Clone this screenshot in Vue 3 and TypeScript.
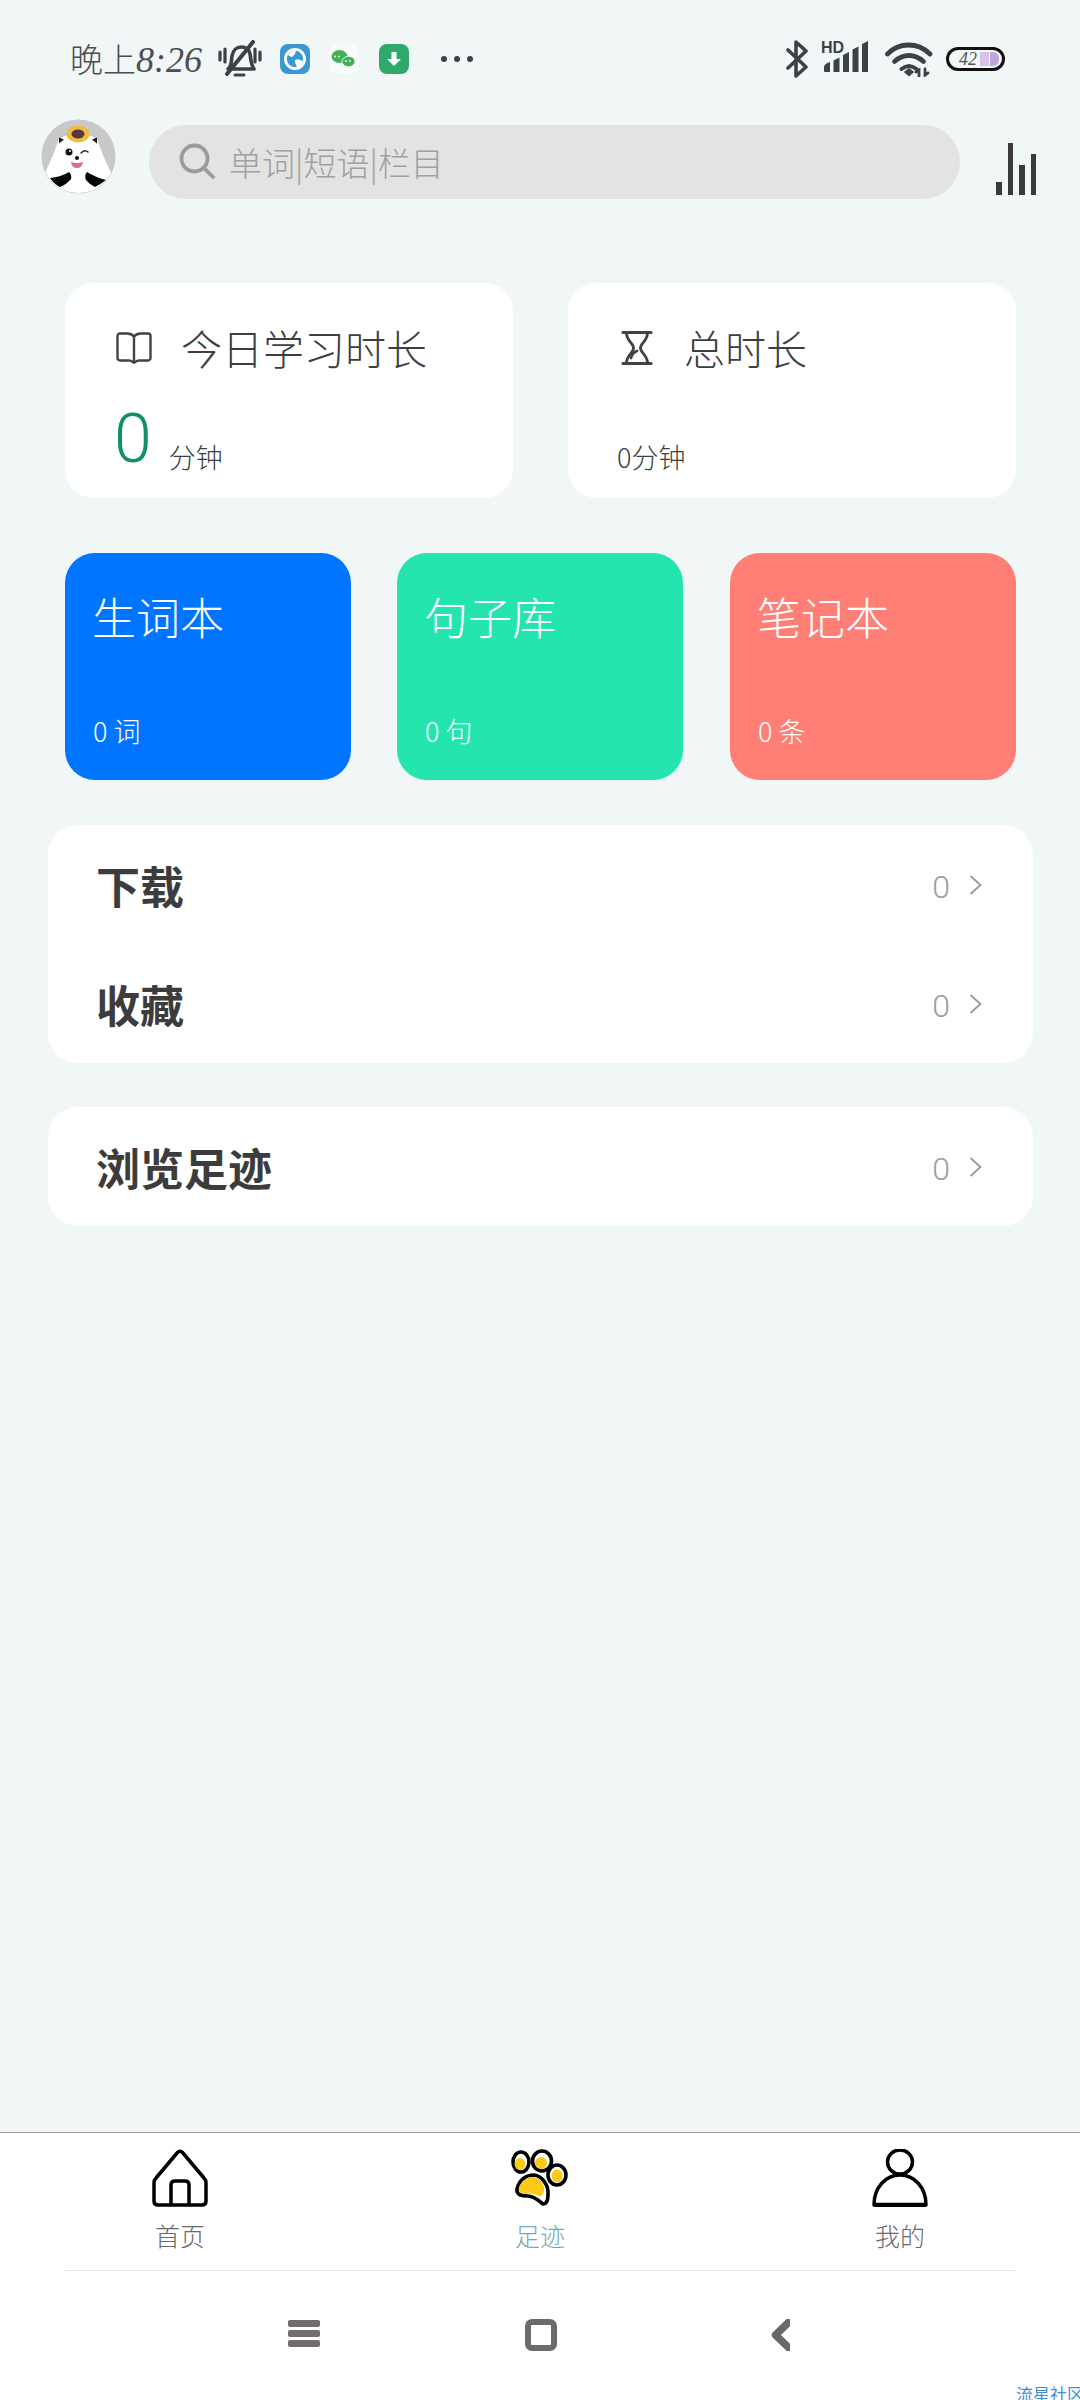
<script setup lang="ts">
const colorCards = [
  { title: '生词本', count: '0 词', cls: 'blue' },
  { title: '句子库', count: '0 句', cls: 'green' },
  { title: '笔记本', count: '0 条', cls: 'red' },
]
const topRows = ['下载', '收藏']
</script>

<template>
  <div class="page">
    <div class="status">
      <div class="status-left">
        <span class="time"><span>晚上</span><span class="time-num">8:26</span></span>
        <svg class="bell" width="44" height="38" viewBox="0 0 44 38" fill="none" stroke="#3c4144" stroke-width="3.2" stroke-linecap="round">
          <path d="M2 12v8M7 9v13M37 9v13M42 12v8" />
          <path d="M10 29c4-3 3-7 4-13 1-6 5-9 9-9 5 0 8 2 9 7 1 6 1 11 4 15H10z" stroke-width="3.6" stroke-linejoin="round" />
          <path d="M9 34 35 2" stroke-width="4" />
          <path d="M17 35h9" stroke-width="3" />
        </svg>
        <svg class="app-icon first" width="32" height="32" viewBox="0 0 32 32">
          <rect x="1" y="1" width="30" height="30" rx="8" fill="#3b97d3" />
          <circle cx="16" cy="16" r="11" fill="#fff" />
          <circle cx="16" cy="16" r="8.2" fill="#3b97d3" />
          <path d="M9 12c3-4 6-5 8-5l-1 4-3 3-3-1zM16 17c3-2 5 0 8 1-1 4-3 6-6 7 0-3-3-5-2-8z" fill="#fff" />
        </svg>
        <svg class="app-icon wechat" width="32" height="32" viewBox="0 0 32 32">
          <rect x="1" y="1" width="30" height="30" rx="9" fill="#f7fbfa" />
          <ellipse cx="11.500" cy="13.500" rx="8" ry="6.400" fill="#43b05c" />
          <ellipse cx="20.500" cy="18.500" rx="6.500" ry="5.200" fill="#43b05c" stroke="#f7fbfa" stroke-width=".8" />
          <path d="M7 13.500h.01M11 13.500h.01M18 18h.01M22 18h.01" stroke="#eaf6ec" stroke-width="1.800" stroke-linecap="round" />
        </svg>
        <svg class="app-icon download" width="32" height="32" viewBox="0 0 32 32">
          <rect x="1" y="1" width="30" height="30" rx="8" fill="#2fa96b" />
          <path d="M13.500 9h5v7h4.500L16 23l-7-7h4.500z" fill="#fff" />
        </svg>
        <div class="dots"><i></i><i></i><i></i></div>
      </div>
      <div class="status-right">
        <svg width="24" height="38" viewBox="0 0 24 38" fill="none" stroke="#3c4144" stroke-width="3.600" stroke-linecap="round" stroke-linejoin="round">
          <path d="M2 10 20 27 10 36V2l10 9L2 28" />
        </svg>
        <svg class="signal" width="52" height="34" viewBox="0 0 52 34">
          <text x="0" y="12" class="hd">HD</text>
          <path d="M3 26q0-3 6-5v10H4q-1 0-1-1zM12.500 19.500l6-3V31h-6zM22 14l6-3v20h-6zM31.500 8.500l6-3V31h-6zM41 3l6-3V31h-6z" fill="#3c4144" />
        </svg>
        <svg class="wifi" width="48" height="36" viewBox="0 0 48 36" fill="none" stroke="#3c4144" stroke-width="4.800" stroke-linecap="round">
          <path d="M2.500 13C14 1 33 1 45 13" />
          <path d="M9.500 20.500c9-8 20-8 29 0" />
          <path d="M16.500 28c5-4 10-4 15 0" stroke-width="4" />
          <path d="M20 31l4-3 4 3-4 3.500z" fill="#3c4144" stroke-width="1.500" />
          <path d="M34 35v-6l-3 2M40 28v6l3-2" stroke-width="2.800" />
        </svg>
        <div class="battery">
          <span class="batt-num">42</span>
          <i class="cell"></i><i class="cell dark"></i>
        </div>
      </div>
    </div>

    <div class="header">
      <svg class="avatar" width="75" height="75" viewBox="0 0 75 75">
        <defs>
          <clipPath id="avatarClip"><circle cx="37.500" cy="37.500" r="36.500" /></clipPath>
        </defs>
        <circle cx="37.500" cy="37.500" r="37" fill="#c9c9c9" />
        <g clip-path="url(#avatarClip)">
          <path d="M18 20Q37 9 56 20 62 38 71 56V80H3V56Q12 38 18 20z" fill="#fff" />
          <path d="M18 18.500l5 2-5 4zM56 18.500l-5 2 5 4z" fill="#1a1a1a" />
          <path d="M9 59Q20 58 28 53 31 56 30 60 26 65 19 68 13 65 9 59zM65 61Q54 58 46 53 43 56 45 61 48 65 54 68 60 65 65 61z" fill="#050505" />
        </g>
        <ellipse cx="37" cy="15" rx="11.500" ry="8.500" fill="#edbd3c" />
        <ellipse cx="37" cy="15" rx="6.500" ry="4.500" fill="#5b3540" />
        <circle cx="28" cy="33" r="3.500" fill="#111" />
        <circle cx="29" cy="32" r="1" fill="#fff" />
        <path d="M40 34q3.500-4 7-1" fill="none" stroke="#222" stroke-width="1.500" stroke-linecap="round" />
        <circle cx="36" cy="39" r="2" fill="#111" />
        <path d="M30 43q6 2 12 0-1 6-6 6-5 0-6-6z" fill="#d86f86" />
      </svg>
      <div class="search">
        <svg width="36" height="36" viewBox="0 0 36 36" fill="none" stroke="#9b9b9b" stroke-width="3.800" stroke-linecap="round">
          <circle cx="15.500" cy="15.500" r="13" />
          <path d="M25 25l9 9" />
        </svg>
        <span class="search-text">单词|短语|栏目</span>
      </div>
      <div class="chart">
        <i class="b1"></i><i class="b2"></i><i class="b3"></i><i class="b4"></i>
      </div>
    </div>

    <main class="main">
      <section class="stats">
        <div class="stat stat-today">
          <div class="stat-title">
            <svg width="36" height="32" viewBox="0 0 36 32" fill="none" stroke="#3f4345" stroke-width="2.400" stroke-linejoin="round">
              <path d="M18 4.500C16 2 14 1.500 11 1.500H4A2.500 2.500 0 0 0 1.500 4v22A2.500 2.500 0 0 0 4 28.500h9c2 0 3 1 5 2.300 2-1.300 3-2.300 5-2.300h9a2.500 2.500 0 0 0 2.500-2.500V4A2.500 2.500 0 0 0 32 1.500h-7c-3 0-5 .5-7 3z" />
              <path d="M18 4.500v26" />
            </svg>
            <span class="today-label">今日学习时长</span>
          </div>
          <div class="stat-foot">
            <span class="big-zero">0</span>
            <span class="unit">分钟</span>
          </div>
        </div>
        <div class="stat stat-total">
          <div class="stat-title">
            <svg width="32" height="36" viewBox="0 0 32 36" fill="none" stroke="#3f4345" stroke-width="2.800" stroke-linecap="round">
              <path d="M2 2.500h28M2 33.500h28" stroke-width="3.200" />
              <path d="M5.500 3c0 8 7 10 7 15s-7 7-7 15M26.500 3c0 8-7 10-7 15s7 7 7 15" />
              <path d="M10 28q1-5 6-7" />
            </svg>
            <span class="total-label">总时长</span>
          </div>
          <div class="stat-foot">
            <span class="unit total-unit">0分钟</span>
          </div>
        </div>
      </section>

      <section class="colors">
        <div v-for="card in colorCards" :key="card.title" class="color-card" :class="card.cls">
          <div class="color-title">{{ card.title }}</div>
          <div class="color-count">{{ card.count }}</div>
        </div>
      </section>

      <section class="list list-first">
        <div v-for="row in topRows" :key="row" class="row">
          <span class="row-title">{{ row }}</span>
          <span class="row-right">
            <span class="row-num">0</span>
            <svg width="13" height="20" viewBox="0 0 13 20" fill="none" stroke="#9a9a9a" stroke-width="1.800">
              <path d="M1.500 1 11.500 10 1.500 19" />
            </svg>
          </span>
        </div>
      </section>

      <section class="list list-second">
        <div class="row">
          <span class="row-title">浏览足迹</span>
          <span class="row-right">
            <span class="row-num">0</span>
            <svg width="13" height="20" viewBox="0 0 13 20" fill="none" stroke="#9a9a9a" stroke-width="1.800">
              <path d="M1.500 1 11.500 10 1.500 19" />
            </svg>
          </span>
        </div>
      </section>
    </main>

    <footer class="footer">
      <nav class="tabs">
        <div class="tab">
          <svg width="56" height="58" viewBox="0 0 56 58" fill="none" stroke="#000" stroke-width="3.500" stroke-linejoin="round">
            <path d="M25.500 3.500Q28 .8 30.500 3.500L52 29Q54 31 54 34V52Q54 56 50 56H6Q2 56 2 52V34Q2 31 4 29Z" />
            <path d="M19 56V36q0-4 4-4h10q4 0 4 4v20" />
          </svg>
          <span class="tab-label">首页</span>
        </div>
        <div class="tab">
          <svg width="60" height="58" viewBox="0 0 60 58" stroke="#000" stroke-width="3.600">
            <ellipse cx="11" cy="13" rx="8" ry="10" fill="#fff" />
            <ellipse cx="32" cy="12" rx="9.500" ry="10" fill="#fff" />
            <ellipse cx="47" cy="26" rx="9" ry="10" fill="#fff" />
            <path d="M7 40C9 31 16 26 24 26 32 27 39 36 38 46 38 52 36 55 33 55 28 51 24 47 18 47 12 47 6 46 7 40Z" fill="#fff" />
            <g stroke="none" fill="#fccb1a">
              <ellipse cx="10" cy="15" rx="5.500" ry="6" />
              <ellipse cx="31" cy="14" rx="6" ry="6" />
              <ellipse cx="47" cy="27" rx="5.500" ry="6.500" />
              <path d="M9 39c2-7 8-11 15-11 6 1 11 7 10 14-1 4-3 6-6 5-3-2-7-3-11-2-5 0-9-1-8-6z" />
            </g>
          </svg>
          <span class="tab-label active">足迹</span>
        </div>
        <div class="tab">
          <svg width="56" height="58" viewBox="0 0 56 58" fill="none" stroke="#000" stroke-width="3.500">
            <ellipse cx="28" cy="13" rx="12.500" ry="12" />
            <path d="M2 56C2 38 14 26 28 26 42 26 54 38 54 56Z" stroke-linejoin="round" />
            <path d="M2 56H54" stroke-width="4.500" />
          </svg>
          <span class="tab-label">我的</span>
        </div>
      </nav>
      <div class="tabs-divider"></div>
      <div class="sysnav">
        <div class="menu-key"><i></i><i></i><i></i></div>
        <div class="home-key"></div>
        <svg class="back-key" width="20" height="32" viewBox="0 0 20 32" fill="none" stroke="#6b6767" stroke-width="7.500" stroke-linejoin="round">
          <path d="M21 1 5.500 16 21 31" />
        </svg>
      </div>
      <span class="watermark">流星社区</span>
    </footer>
  </div>
</template>

<style>
html, body { margin: 0; padding: 0; background: #f1f6f7; }
</style>

<style scoped>
.page {
  position: relative;
  width: 1080px;
  height: 2400px;
  overflow: hidden;
  display: flex;
  flex-direction: column;
  background: #f1f6f7;
  color: #3c3f40;
  font-family: "Noto Sans CJK SC", "Noto Sans", sans-serif;
}
.status {
  height: 38px;
  margin-top: 40px;
  padding: 0 75px 0 70px;
  display: flex;
  justify-content: space-between;
  align-items: center;
}
.status-left, .status-right { display: flex; align-items: center; }
.time { width: 148px; font-size: 33px; line-height: 38px; font-weight: 300; color: #4a4e50; white-space: nowrap; }
.time-num { font-family: "Liberation Serif", serif; font-style: italic; font-size: 36px; }
.app-icon { display: block; margin-left: 20px; }
.app-icon.first { margin-left: 17px; }
.app-icon.wechat { margin-left: 17px; }
.app-icon.download { margin-left: 18px; }
.dots { display: flex; gap: 7px; margin-left: 31px; }
.dots i { width: 6px; height: 6px; border-radius: 50%; background: #3c4144; }
.status-right .signal { margin-left: 11px; margin-top: -2px; overflow: visible; }
.status-right .wifi { margin-left: 12px; }
.hd { font-family: "Liberation Sans", sans-serif; font-size: 16px; font-weight: 700; fill: #3c4144; }
.battery {
  box-sizing: border-box;
  width: 59px;
  height: 24px;
  margin-left: 13px;
  border: 3px solid #111;
  border-radius: 12px;
  padding: 2px 3px 2px 10px;
  display: flex;
  align-items: stretch;
  gap: 1px;
  overflow: hidden;
}
.batt-num { flex: none; width: 20px; font-size: 18px; line-height: 14px; font-weight: 300; color: #555; font-family: "Liberation Serif", serif; font-style: italic; }
.cell { flex: 1; background: #d5c4e8; }
.cell.dark { background: #bea6dc; border-radius: 0 6px 6px 0; }

.header {
  margin-top: 41px;
  padding-left: 41px;
  display: flex;
  align-items: flex-start;
}
.avatar { display: block; flex: none; }
.search {
  box-sizing: border-box;
  width: 811px;
  height: 74px;
  margin: 6px 0 0 33px;
  padding-left: 30px;
  border-radius: 37px;
  background: #e3e3e3;
  display: flex;
  align-items: center;
  gap: 14px;
}
.search svg { margin-top: -2px; }
.search-text { font-size: 33px; font-weight: 300; line-height: 44px; color: #a0a0a0; white-space: nowrap; }
.chart {
  width: 40px;
  height: 52px;
  margin: 24px 0 0 36px;
  display: flex;
  align-items: flex-end;
  justify-content: space-between;
}
.chart i { width: 5.500px; background: #3a3a3a; }
.b1 { height: 13px; }
.b2 { height: 52px; }
.b3 { height: 30px; }
.b4 { height: 41px; }

.main { padding: 0 64px 0 65px; }
.stats { margin-top: 84px; display: flex; justify-content: space-between; }
.stat {
  box-sizing: border-box;
  height: 215px;
  width: 448px;
  border-radius: 28px;
  background: #fff;
  position: relative;
  display: flex;
  flex-direction: column;
}
.stat-today { padding: 43px 0 0 51px; }
.stat-total { padding: 43px 0 0 53px; }
.stat-title { display: flex; align-items: center; height: 44px; }
.today-label { margin: -3px 0 0 29px; font-size: 41px; font-weight: 300; line-height: 44px; white-space: nowrap; color: #3c3f40; }
.total-label { margin: -3px 0 0 31px; font-size: 41px; font-weight: 300; line-height: 44px; white-space: nowrap; color: #3c3f40; }
.stat-foot { margin-top: auto; height: 89px; display: flex; align-items: flex-end; padding-bottom: 22px; box-sizing: border-box; }
.big-zero { margin-left: -2px; font-family: Roboto, sans-serif; font-size: 68px; line-height: 70px; font-weight: 300; letter-spacing: 1px; color: #0f9160; margin-bottom: 2px; }
.unit { margin-left: 16px; font-size: 27px; line-height: 36px; font-weight: 300; color: #3c3f40; margin-bottom: 1px; white-space: nowrap; }
.total-unit { margin-left: -4px; }

.colors { margin-top: 55px; display: flex; justify-content: space-between; }
.color-card {
  box-sizing: border-box;
  width: 286px;
  height: 227px;
  border-radius: 30px;
  padding: 35px 0 0 28px;
  color: #fff;
  display: flex;
  flex-direction: column;
}
.blue { background: #0075ff; }
.green { background: #24e5ae; margin-left: -1px; }
.red { background: #ff7e76; }
.color-title { font-size: 44px; line-height: 56px; font-weight: 300; white-space: nowrap; margin-left: -1px; }
.color-count { margin-top: auto; margin-bottom: 31px; font-size: 27px; line-height: 36px; font-weight: 300; word-spacing: 0; }

.list { margin: 0 -17px; background: #fff; border-radius: 30px; }
.list-first { margin-top: 45px; }
.list-second { margin-top: 44px; }
.row {
  height: 119px;
  padding: 0 51px 0 48px;
  display: flex;
  justify-content: space-between;
  align-items: center;
}
.row-title { font-size: 44px; font-weight: 700; line-height: 50px; color: #3c3c3c; padding-top: 0; }
.row-right { display: flex; align-items: center; gap: 19px; }
.row-num { font-family: Roboto, sans-serif; font-size: 32px; line-height: 36px; font-weight: 300; color: #9d9d9d; padding-top: 4px; }

.footer {
  position: relative;
  margin-top: auto;
  height: 268px;
  box-sizing: border-box;
  background: #fff;
  border-top: 1px solid #9a9d9d;
  display: flex;
  flex-direction: column;
}
.tabs {
  height: 137px;
  display: grid;
  grid-template-columns: repeat(3, 1fr);
}
.tab { padding-top: 16px; display: flex; flex-direction: column; align-items: center; }
.tab svg { display: block; }
.tab-label { margin-top: 13px; font-size: 25px; line-height: 30px; font-weight: 300; color: #6a6a6a; }
.tab-label.active { color: #75a7b8; }
.tabs-divider { height: 1px; margin: 0 65px; background: #e4e4e4; }
.sysnav {
  flex: 1;
  position: relative;
  display: grid;
  grid-template-columns: 304px 237px 239px;
  padding-top: 48px;
  align-items: start;
  justify-items: end;
}
.menu-key { width: 32px; height: 27px; margin-top: 1px; display: flex; flex-direction: column; justify-content: space-between; margin-right: -16px; grid-column: 1; }
.menu-key i { height: 7px; border-radius: 2px; background: #716d6d; }
.home-key {
  box-sizing: border-box;
  width: 32px; height: 32px;
  margin-right: -16px;
  border: 6px solid #6e6a6a;
  border-radius: 7px;
}
.back-key { display: block; margin-right: -10px; }
.watermark {
  position: absolute;
  left: 1016px;
  bottom: -5px;
  font-size: 17px;
  line-height: 22px;
  color: #3f8fd6;
  white-space: nowrap;
}
</style>
